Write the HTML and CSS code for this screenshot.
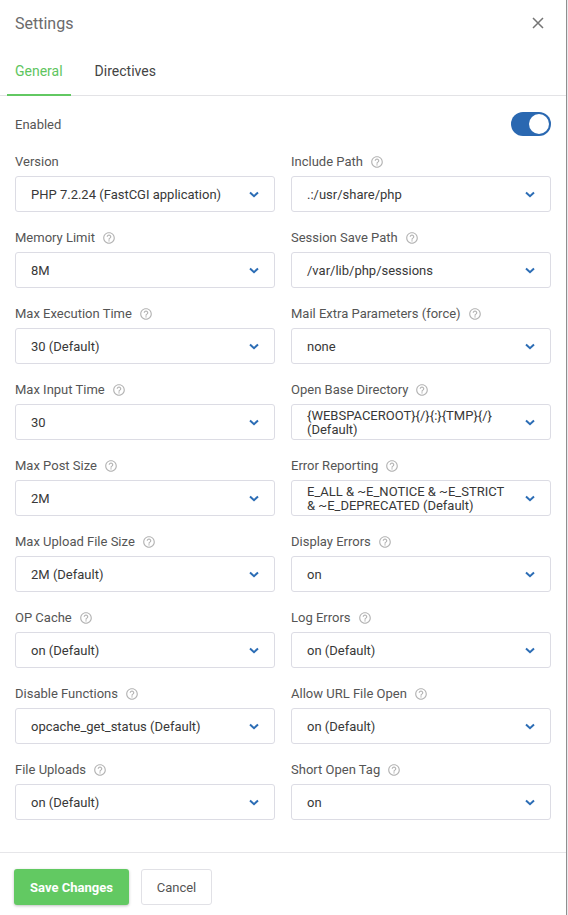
FILE: index.html
```html
<!DOCTYPE html>
<html>
<head>
<meta charset="utf-8">
<link rel="stylesheet" href="styles.css">
</head>
<body>
<div class="dialog">
  <div class="header">
    <span class="title">Settings</span>
    <svg class="close" width="12" height="12" viewBox="0 0 12 12"><path d="M1 1L11 11M11 1L1 11" stroke="#757575" stroke-width="1.5" fill="none"/></svg>
  </div>
  <div class="tabs">
    <div class="tab active">General</div>
    <div class="tab">Directives</div>
  </div>
  <div class="content">
    <div class="enabled-row">
      <span class="label">Enabled</span>
      <div class="toggle"><div class="knob"></div></div>
    </div>
    <div class="grid">
      <div class="field">
        <div class="label">Version</div>
        <div class="select"><span class="value">PHP 7.2.24 (FastCGI application)</span><svg class="chev" width="10" height="7" viewBox="0 0 10 7"><path d="M1 1.5L5 5.2L9 1.5" stroke="#2c6db5" stroke-width="2" fill="none"/></svg></div>
      </div>
      <div class="field">
        <div class="label">Include Path <svg class="help" width="14" height="14" viewBox="0 0 24 24"><path fill="#b4b4b4" d="M11 18h2v-2h-2v2zm1-16C6.48 2 2 6.48 2 12s4.48 10 10 10 10-4.48 10-10S17.52 2 12 2zm0 18c-4.41 0-8-3.590-8-8s3.59-8 8-8 8 3.59 8 8-3.59 8-8 8zm0-14c-2.21 0-4 1.79-4 4h2c0-1.1.9-2 2-2s2 .9 2 2c0 2-3 1.75-3 5h2c0-2.25 3-2.5 3-5 0-2.21-1.79-4-4-4z"/></svg></div>
        <div class="select"><span class="value">.:/usr/share/php</span><svg class="chev" width="10" height="7" viewBox="0 0 10 7"><path d="M1 1.5L5 5.2L9 1.5" stroke="#2c6db5" stroke-width="2" fill="none"/></svg></div>
      </div>
      <div class="field">
        <div class="label">Memory Limit <svg class="help" width="14" height="14" viewBox="0 0 24 24"><path fill="#b4b4b4" d="M11 18h2v-2h-2v2zm1-16C6.48 2 2 6.48 2 12s4.48 10 10 10 10-4.48 10-10S17.52 2 12 2zm0 18c-4.41 0-8-3.59-8-8s3.59-8 8-8 8 3.59 8 8-3.59 8-8 8zm0-14c-2.21 0-4 1.79-4 4h2c0-1.1.9-2 2-2s2 .9 2 2c0 2-3 1.75-3 5h2c0-2.25 3-2.5 3-5 0-2.21-1.79-4-4-4z"/></svg></div>
        <div class="select"><span class="value">8M</span><svg class="chev" width="10" height="7" viewBox="0 0 10 7"><path d="M1 1.5L5 5.2L9 1.5" stroke="#2c6db5" stroke-width="2" fill="none"/></svg></div>
      </div>
      <div class="field">
        <div class="label">Session Save Path <svg class="help" width="14" height="14" viewBox="0 0 24 24"><path fill="#b4b4b4" d="M11 18h2v-2h-2v2zm1-16C6.48 2 2 6.48 2 12s4.48 10 10 10 10-4.48 10-10S17.52 2 12 2zm0 18c-4.41 0-8-3.59-8-8s3.59-8 8-8 8 3.59 8 8-3.59 8-8 8zm0-14c-2.21 0-4 1.79-4 4h2c0-1.1.9-2 2-2s2 .9 2 2c0 2-3 1.75-3 5h2c0-2.25 3-2.5 3-5 0-2.21-1.79-4-4-4z"/></svg></div>
        <div class="select"><span class="value">/var/lib/php/sessions</span><svg class="chev" width="10" height="7" viewBox="0 0 10 7"><path d="M1 1.5L5 5.2L9 1.5" stroke="#2c6db5" stroke-width="2" fill="none"/></svg></div>
      </div>
      <div class="field">
        <div class="label">Max Execution Time <svg class="help" width="14" height="14" viewBox="0 0 24 24"><path fill="#b4b4b4" d="M11 18h2v-2h-2v2zm1-16C6.48 2 2 6.48 2 12s4.48 10 10 10 10-4.48 10-10S17.52 2 12 2zm0 18c-4.41 0-8-3.59-8-8s3.59-8 8-8 8 3.59 8 8-3.59 8-8 8zm0-14c-2.21 0-4 1.79-4 4h2c0-1.1.9-2 2-2s2 .9 2 2c0 2-3 1.75-3 5h2c0-2.25 3-2.5 3-5 0-2.21-1.79-4-4-4z"/></svg></div>
        <div class="select"><span class="value">30 (Default)</span><svg class="chev" width="10" height="7" viewBox="0 0 10 7"><path d="M1 1.5L5 5.2L9 1.5" stroke="#2c6db5" stroke-width="2" fill="none"/></svg></div>
      </div>
      <div class="field">
        <div class="label">Mail Extra Parameters (force) <svg class="help" width="14" height="14" viewBox="0 0 24 24"><path fill="#b4b4b4" d="M11 18h2v-2h-2v2zm1-16C6.48 2 2 6.48 2 12s4.48 10 10 10 10-4.48 10-10S17.52 2 12 2zm0 18c-4.41 0-8-3.59-8-8s3.59-8 8-8 8 3.59 8 8-3.59 8-8 8zm0-14c-2.21 0-4 1.79-4 4h2c0-1.1.9-2 2-2s2 .9 2 2c0 2-3 1.75-3 5h2c0-2.25 3-2.5 3-5 0-2.21-1.79-4-4-4z"/></svg></div>
        <div class="select"><span class="value">none</span><svg class="chev" width="10" height="7" viewBox="0 0 10 7"><path d="M1 1.5L5 5.2L9 1.5" stroke="#2c6db5" stroke-width="2" fill="none"/></svg></div>
      </div>
      <div class="field">
        <div class="label">Max Input Time <svg class="help" width="14" height="14" viewBox="0 0 24 24"><path fill="#b4b4b4" d="M11 18h2v-2h-2v2zm1-16C6.48 2 2 6.48 2 12s4.48 10 10 10 10-4.48 10-10S17.52 2 12 2zm0 18c-4.41 0-8-3.59-8-8s3.59-8 8-8 8 3.59 8 8-3.59 8-8 8zm0-14c-2.21 0-4 1.79-4 4h2c0-1.1.9-2 2-2s2 .9 2 2c0 2-3 1.75-3 5h2c0-2.25 3-2.5 3-5 0-2.21-1.79-4-4-4z"/></svg></div>
        <div class="select"><span class="value">30</span><svg class="chev" width="10" height="7" viewBox="0 0 10 7"><path d="M1 1.5L5 5.2L9 1.5" stroke="#2c6db5" stroke-width="2" fill="none"/></svg></div>
      </div>
      <div class="field">
        <div class="label">Open Base Directory <svg class="help" width="14" height="14" viewBox="0 0 24 24"><path fill="#b4b4b4" d="M11 18h2v-2h-2v2zm1-16C6.48 2 2 6.48 2 12s4.48 10 10 10 10-4.48 10-10S17.52 2 12 2zm0 18c-4.41 0-8-3.59-8-8s3.59-8 8-8 8 3.59 8 8-3.59 8-8 8zm0-14c-2.21 0-4 1.79-4 4h2c0-1.1.9-2 2-2s2 .9 2 2c0 2-3 1.75-3 5h2c0-2.25 3-2.5 3-5 0-2.21-1.79-4-4-4z"/></svg></div>
        <div class="select"><span class="value two">{WEBSPACEROOT}{/}{:}{TMP}{/}<br>(Default)</span><svg class="chev" width="10" height="7" viewBox="0 0 10 7"><path d="M1 1.5L5 5.2L9 1.5" stroke="#2c6db5" stroke-width="2" fill="none"/></svg></div>
      </div>
      <div class="field">
        <div class="label">Max Post Size <svg class="help" width="14" height="14" viewBox="0 0 24 24"><path fill="#b4b4b4" d="M11 18h2v-2h-2v2zm1-16C6.48 2 2 6.48 2 12s4.48 10 10 10 10-4.48 10-10S17.52 2 12 2zm0 18c-4.41 0-8-3.59-8-8s3.59-8 8-8 8 3.59 8 8-3.59 8-8 8zm0-14c-2.21 0-4 1.79-4 4h2c0-1.1.9-2 2-2s2 .9 2 2c0 2-3 1.75-3 5h2c0-2.25 3-2.5 3-5 0-2.21-1.79-4-4-4z"/></svg></div>
        <div class="select"><span class="value">2M</span><svg class="chev" width="10" height="7" viewBox="0 0 10 7"><path d="M1 1.5L5 5.2L9 1.5" stroke="#2c6db5" stroke-width="2" fill="none"/></svg></div>
      </div>
      <div class="field">
        <div class="label">Error Reporting <svg class="help" width="14" height="14" viewBox="0 0 24 24"><path fill="#b4b4b4" d="M11 18h2v-2h-2v2zm1-16C6.48 2 2 6.48 2 12s4.48 10 10 10 10-4.48 10-10S17.52 2 12 2zm0 18c-4.41 0-8-3.59-8-8s3.59-8 8-8 8 3.59 8 8-3.59 8-8 8zm0-14c-2.21 0-4 1.79-4 4h2c0-1.1.9-2 2-2s2 .9 2 2c0 2-3 1.75-3 5h2c0-2.25 3-2.5 3-5 0-2.21-1.79-4-4-4z"/></svg></div>
        <div class="select"><span class="value two">E_ALL &amp; ~E_NOTICE &amp; ~E_STRICT<br>&amp; ~E_DEPRECATED (Default)</span><svg class="chev" width="10" height="7" viewBox="0 0 10 7"><path d="M1 1.5L5 5.2L9 1.5" stroke="#2c6db5" stroke-width="2" fill="none"/></svg></div>
      </div>
      <div class="field">
        <div class="label">Max Upload File Size <svg class="help" width="14" height="14" viewBox="0 0 24 24"><path fill="#b4b4b4" d="M11 18h2v-2h-2v2zm1-16C6.48 2 2 6.48 2 12s4.48 10 10 10 10-4.48 10-10S17.52 2 12 2zm0 18c-4.41 0-8-3.59-8-8s3.59-8 8-8 8 3.59 8 8-3.59 8-8 8zm0-14c-2.21 0-4 1.79-4 4h2c0-1.1.9-2 2-2s2 .9 2 2c0 2-3 1.75-3 5h2c0-2.25 3-2.5 3-5 0-2.21-1.79-4-4-4z"/></svg></div>
        <div class="select"><span class="value">2M (Default)</span><svg class="chev" width="10" height="7" viewBox="0 0 10 7"><path d="M1 1.5L5 5.2L9 1.5" stroke="#2c6db5" stroke-width="2" fill="none"/></svg></div>
      </div>
      <div class="field">
        <div class="label">Display Errors <svg class="help" width="14" height="14" viewBox="0 0 24 24"><path fill="#b4b4b4" d="M11 18h2v-2h-2v2zm1-16C6.48 2 2 6.48 2 12s4.48 10 10 10 10-4.48 10-10S17.52 2 12 2zm0 18c-4.41 0-8-3.59-8-8s3.59-8 8-8 8 3.59 8 8-3.59 8-8 8zm0-14c-2.21 0-4 1.79-4 4h2c0-1.1.9-2 2-2s2 .9 2 2c0 2-3 1.75-3 5h2c0-2.25 3-2.5 3-5 0-2.21-1.79-4-4-4z"/></svg></div>
        <div class="select"><span class="value">on</span><svg class="chev" width="10" height="7" viewBox="0 0 10 7"><path d="M1 1.5L5 5.2L9 1.5" stroke="#2c6db5" stroke-width="2" fill="none"/></svg></div>
      </div>
      <div class="field">
        <div class="label">OP Cache <svg class="help" width="14" height="14" viewBox="0 0 24 24"><path fill="#b4b4b4" d="M11 18h2v-2h-2v2zm1-16C6.48 2 2 6.48 2 12s4.48 10 10 10 10-4.48 10-10S17.52 2 12 2zm0 18c-4.41 0-8-3.59-8-8s3.59-8 8-8 8 3.59 8 8-3.59 8-8 8zm0-14c-2.21 0-4 1.79-4 4h2c0-1.1.9-2 2-2s2 .9 2 2c0 2-3 1.75-3 5h2c0-2.25 3-2.5 3-5 0-2.21-1.79-4-4-4z"/></svg></div>
        <div class="select"><span class="value">on (Default)</span><svg class="chev" width="10" height="7" viewBox="0 0 10 7"><path d="M1 1.5L5 5.2L9 1.5" stroke="#2c6db5" stroke-width="2" fill="none"/></svg></div>
      </div>
      <div class="field">
        <div class="label">Log Errors <svg class="help" width="14" height="14" viewBox="0 0 24 24"><path fill="#b4b4b4" d="M11 18h2v-2h-2v2zm1-16C6.48 2 2 6.48 2 12s4.48 10 10 10 10-4.48 10-10S17.52 2 12 2zm0 18c-4.41 0-8-3.59-8-8s3.59-8 8-8 8 3.59 8 8-3.59 8-8 8zm0-14c-2.21 0-4 1.79-4 4h2c0-1.1.9-2 2-2s2 .9 2 2c0 2-3 1.75-3 5h2c0-2.25 3-2.5 3-5 0-2.21-1.79-4-4-4z"/></svg></div>
        <div class="select"><span class="value">on (Default)</span><svg class="chev" width="10" height="7" viewBox="0 0 10 7"><path d="M1 1.5L5 5.2L9 1.5" stroke="#2c6db5" stroke-width="2" fill="none"/></svg></div>
      </div>
      <div class="field">
        <div class="label">Disable Functions <svg class="help" width="14" height="14" viewBox="0 0 24 24"><path fill="#b4b4b4" d="M11 18h2v-2h-2v2zm1-16C6.48 2 2 6.48 2 12s4.48 10 10 10 10-4.48 10-10S17.52 2 12 2zm0 18c-4.41 0-8-3.59-8-8s3.59-8 8-8 8 3.59 8 8-3.59 8-8 8zm0-14c-2.21 0-4 1.79-4 4h2c0-1.1.9-2 2-2s2 .9 2 2c0 2-3 1.75-3 5h2c0-2.25 3-2.5 3-5 0-2.21-1.79-4-4-4z"/></svg></div>
        <div class="select"><span class="value">opcache_get_status (Default)</span><svg class="chev" width="10" height="7" viewBox="0 0 10 7"><path d="M1 1.5L5 5.2L9 1.5" stroke="#2c6db5" stroke-width="2" fill="none"/></svg></div>
      </div>
      <div class="field">
        <div class="label">Allow URL File Open <svg class="help" width="14" height="14" viewBox="0 0 24 24"><path fill="#b4b4b4" d="M11 18h2v-2h-2v2zm1-16C6.48 2 2 6.48 2 12s4.48 10 10 10 10-4.48 10-10S17.52 2 12 2zm0 18c-4.41 0-8-3.59-8-8s3.59-8 8-8 8 3.59 8 8-3.59 8-8 8zm0-14c-2.21 0-4 1.79-4 4h2c0-1.1.9-2 2-2s2 .9 2 2c0 2-3 1.75-3 5h2c0-2.25 3-2.5 3-5 0-2.21-1.79-4-4-4z"/></svg></div>
        <div class="select"><span class="value">on (Default)</span><svg class="chev" width="10" height="7" viewBox="0 0 10 7"><path d="M1 1.5L5 5.2L9 1.5" stroke="#2c6db5" stroke-width="2" fill="none"/></svg></div>
      </div>
      <div class="field">
        <div class="label">File Uploads <svg class="help" width="14" height="14" viewBox="0 0 24 24"><path fill="#b4b4b4" d="M11 18h2v-2h-2v2zm1-16C6.48 2 2 6.48 2 12s4.48 10 10 10 10-4.48 10-10S17.52 2 12 2zm0 18c-4.41 0-8-3.59-8-8s3.59-8 8-8 8 3.59 8 8-3.59 8-8 8zm0-14c-2.21 0-4 1.79-4 4h2c0-1.1.9-2 2-2s2 .9 2 2c0 2-3 1.75-3 5h2c0-2.25 3-2.5 3-5 0-2.21-1.79-4-4-4z"/></svg></div>
        <div class="select"><span class="value">on (Default)</span><svg class="chev" width="10" height="7" viewBox="0 0 10 7"><path d="M1 1.5L5 5.2L9 1.5" stroke="#2c6db5" stroke-width="2" fill="none"/></svg></div>
      </div>
      <div class="field">
        <div class="label">Short Open Tag <svg class="help" width="14" height="14" viewBox="0 0 24 24"><path fill="#b4b4b4" d="M11 18h2v-2h-2v2zm1-16C6.48 2 2 6.48 2 12s4.48 10 10 10 10-4.48 10-10S17.52 2 12 2zm0 18c-4.41 0-8-3.59-8-8s3.59-8 8-8 8 3.59 8 8-3.59 8-8 8zm0-14c-2.21 0-4 1.79-4 4h2c0-1.1.9-2 2-2s2 .9 2 2c0 2-3 1.75-3 5h2c0-2.25 3-2.5 3-5 0-2.21-1.79-4-4-4z"/></svg></div>
        <div class="select"><span class="value">on</span><svg class="chev" width="10" height="7" viewBox="0 0 10 7"><path d="M1 1.5L5 5.2L9 1.5" stroke="#2c6db5" stroke-width="2" fill="none"/></svg></div>
      </div>
    </div>
  </div>
  <div class="footer">
    <button class="btn primary">Save Changes</button>
    <button class="btn secondary">Cancel</button>
  </div>
</div>
</body>
</html>
```

FILE: styles.css
```css
html, body {
  margin: 0;
  padding: 0;
  background: #e9e9ec;
}
body {
  font-family: Roboto, "Liberation Sans", Arial, sans-serif;
  font-size: 13px;
  color: #333;
}
.dialog {
  width: 566px;
  height: 915px;
  background: #fff;
  border-right: 1px solid #8f8f8f;
  overflow: hidden;
}
.header {
  height: 46px;
  display: flex;
  align-items: center;
  justify-content: space-between;
  padding: 0 22px 0 15px;
}
.title {
  font-size: 16px;
  color: #6b6b6b;
}
.close {
  display: block;
}
.tabs {
  height: 50px;
  box-sizing: border-box;
  border-bottom: 1px solid #e3e3e6;
  display: flex;
  gap: 16px;
  padding-left: 7px;
}
.tab {
  padding: 2px 8px 0 8px;
  display: flex;
  align-items: center;
  font-size: 14px;
  color: #444;
  border-bottom: 2px solid transparent;
  margin-bottom: -1px;
}
.tab.active {
  color: #5ec55e;
  border-bottom-color: #62c862;
}
.content {
  padding: 16px 15px 32px 15px;
  border-bottom: 1px solid #e6e6e9;
}
.enabled-row {
  height: 24px;
  display: flex;
  align-items: center;
  justify-content: space-between;
  margin-bottom: 17px;
}
.enabled-row .label {
  padding-top: 2px;
}
.label {
  color: #555;
  font-size: 13px;
  line-height: 16px;
  height: 16px;
  display: flex;
  align-items: center;
}
.field .label {
  padding-top: 1px;
}
.help {
  margin-left: 7px;
  display: block;
}
.toggle {
  width: 40px;
  height: 24px;
  border-radius: 12px;
  background: #2a68b1;
  position: relative;
}
.knob {
  position: absolute;
  right: 2px;
  top: 2px;
  width: 20px;
  height: 20px;
  border-radius: 50%;
  background: #fff;
}
.grid {
  display: grid;
  grid-template-columns: 260px 260px;
  column-gap: 16px;
  row-gap: 17px;
}
.field {
  display: flex;
  flex-direction: column;
  gap: 6px;
}
.select {
  height: 36px;
  box-sizing: border-box;
  border: 1px solid #dcdce4;
  border-radius: 3px;
  display: flex;
  align-items: center;
  justify-content: space-between;
  padding: 0 15px 0 15px;
}
.value {
  color: #383838;
  font-size: 13px;
  white-space: nowrap;
}
.value.two {
  line-height: 14px;
  padding-top: 1px;
}
.chev {
  display: block;
  flex: none;
}
.footer {
  padding: 16px 14px;
  display: flex;
  gap: 12px;
}
.btn {
  height: 36px;
  font-family: Roboto, "Liberation Sans", Arial, sans-serif;
  font-size: 13px;
  border-radius: 3px;
  cursor: pointer;
}
.primary {
  background: #62c962;
  color: #fff;
  font-weight: bold;
  border: none;
  padding: 0 16px;
  width: 115px;
  box-shadow: 0 1px 3px rgba(0,0,0,0.25);
}
.secondary {
  background: #fff;
  color: #555;
  border: 1px solid #e1e1e6;
  width: 71px;
  padding: 0;
}
```
